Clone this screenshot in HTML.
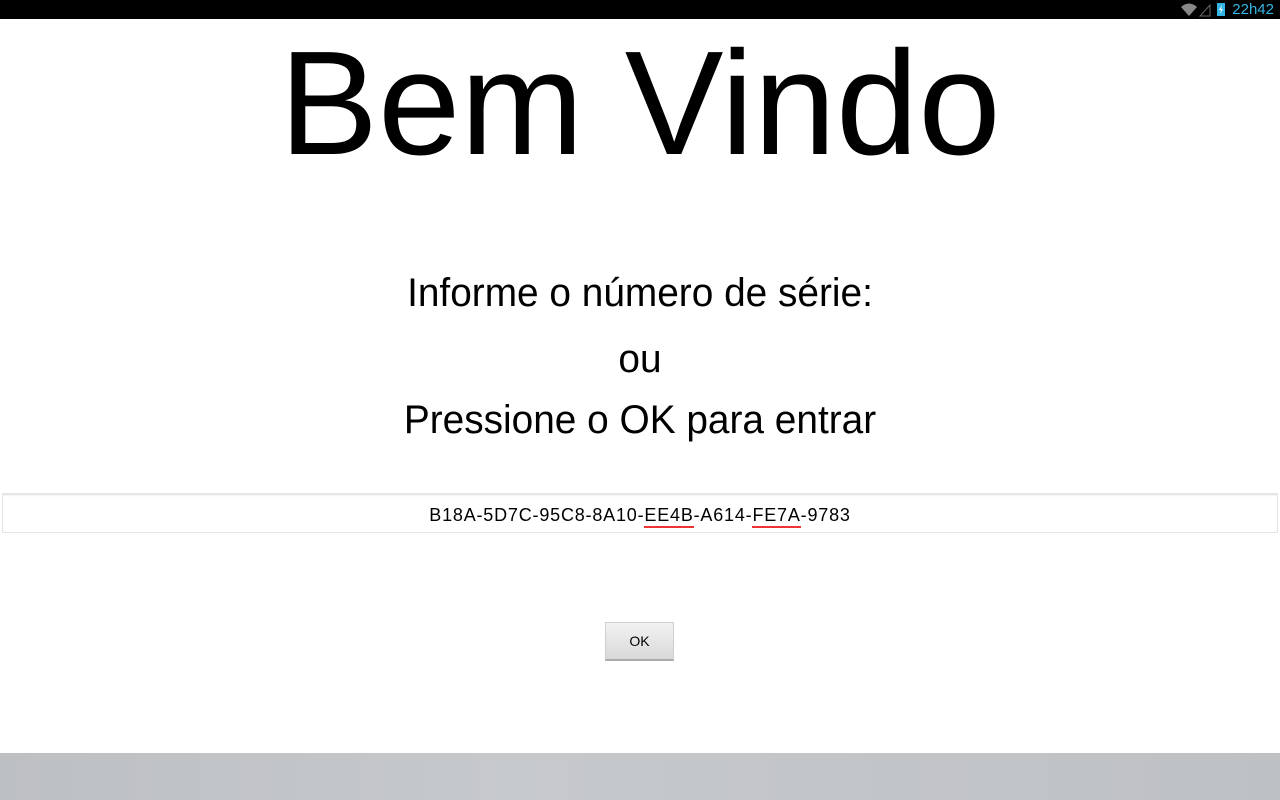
<!DOCTYPE html>
<html><head><style>
body{margin:0;width:1280px;height:800px;background:#fff;position:relative;overflow:hidden;font-family:"Liberation Sans",sans-serif;}
.sb{position:absolute;top:0;left:0;width:1280px;height:19px;background:#000;}
.time{position:absolute;right:6px;top:1px;color:#33b5e5;font-size:15px;}
.c{position:absolute;left:0;width:1280px;text-align:center;color:#000;white-space:nowrap;}
.field{position:absolute;left:2px;top:493px;width:1274px;height:38px;border:1px solid #e4e4e4;box-shadow:0 2px 2px -1px #ddd inset;}
.u{border-bottom:2px solid #e33;padding-bottom:1px;}
.btn{position:absolute;left:605px;top:622px;width:69px;height:39px;background:linear-gradient(#f2f2f2,#d9d9d9);border:1px solid #cfcfcf;border-bottom:2px solid #aaa;box-sizing:border-box;font-size:14px;text-align:center;line-height:37px;}
.bot{position:absolute;left:0;top:753px;width:1280px;height:47px;background:linear-gradient(90deg,#bdc0c3,#c6c9cc 40%,#bec1c4);}
</style></head><body>
<div class="sb">
<svg style="position:absolute;left:1180px;top:2px" width="34" height="15"><path d="M1 5 Q9 -2 17 5 L9 14 Z" fill="#888"/><path d="M20 14 L30 3 L30 14 Z" fill="none" stroke="#666"/></svg>
<svg style="position:absolute;left:1216px;top:2px" width="11" height="15"><rect x="1" y="1" width="8" height="13" fill="#33b5e5"/><path d="M6 3 L3 8 L5 8 L4 12 L7 7 L5 7 Z" fill="#fff"/></svg>
<div class="time">22h42</div>
</div>
<div class="c" style="top:14px;font-size:148px;line-height:180px;transform:scaleX(1.0)">Bem Vindo</div>
<div class="c" style="top:270px;font-size:40px;line-height:46px;transform:scaleX(0.97)">Informe o número de série:</div>
<div class="c" style="top:336px;font-size:40px;line-height:46px;transform:scaleX(0.97)">ou</div>
<div class="c" style="top:397px;font-size:40px;line-height:46px;transform:scaleX(0.97)">Pressione o OK para entrar</div>
<div class="field"></div>
<div class="c" style="top:503px;font-size:18px;line-height:24px;letter-spacing:0.8px">B18A-5D7C-95C8-8A10-<span class="u">EE4B</span>-A614-<span class="u">FE7A</span>-9783</div>
<div class="btn">OK</div>
<div class="bot"></div>
</body></html>
